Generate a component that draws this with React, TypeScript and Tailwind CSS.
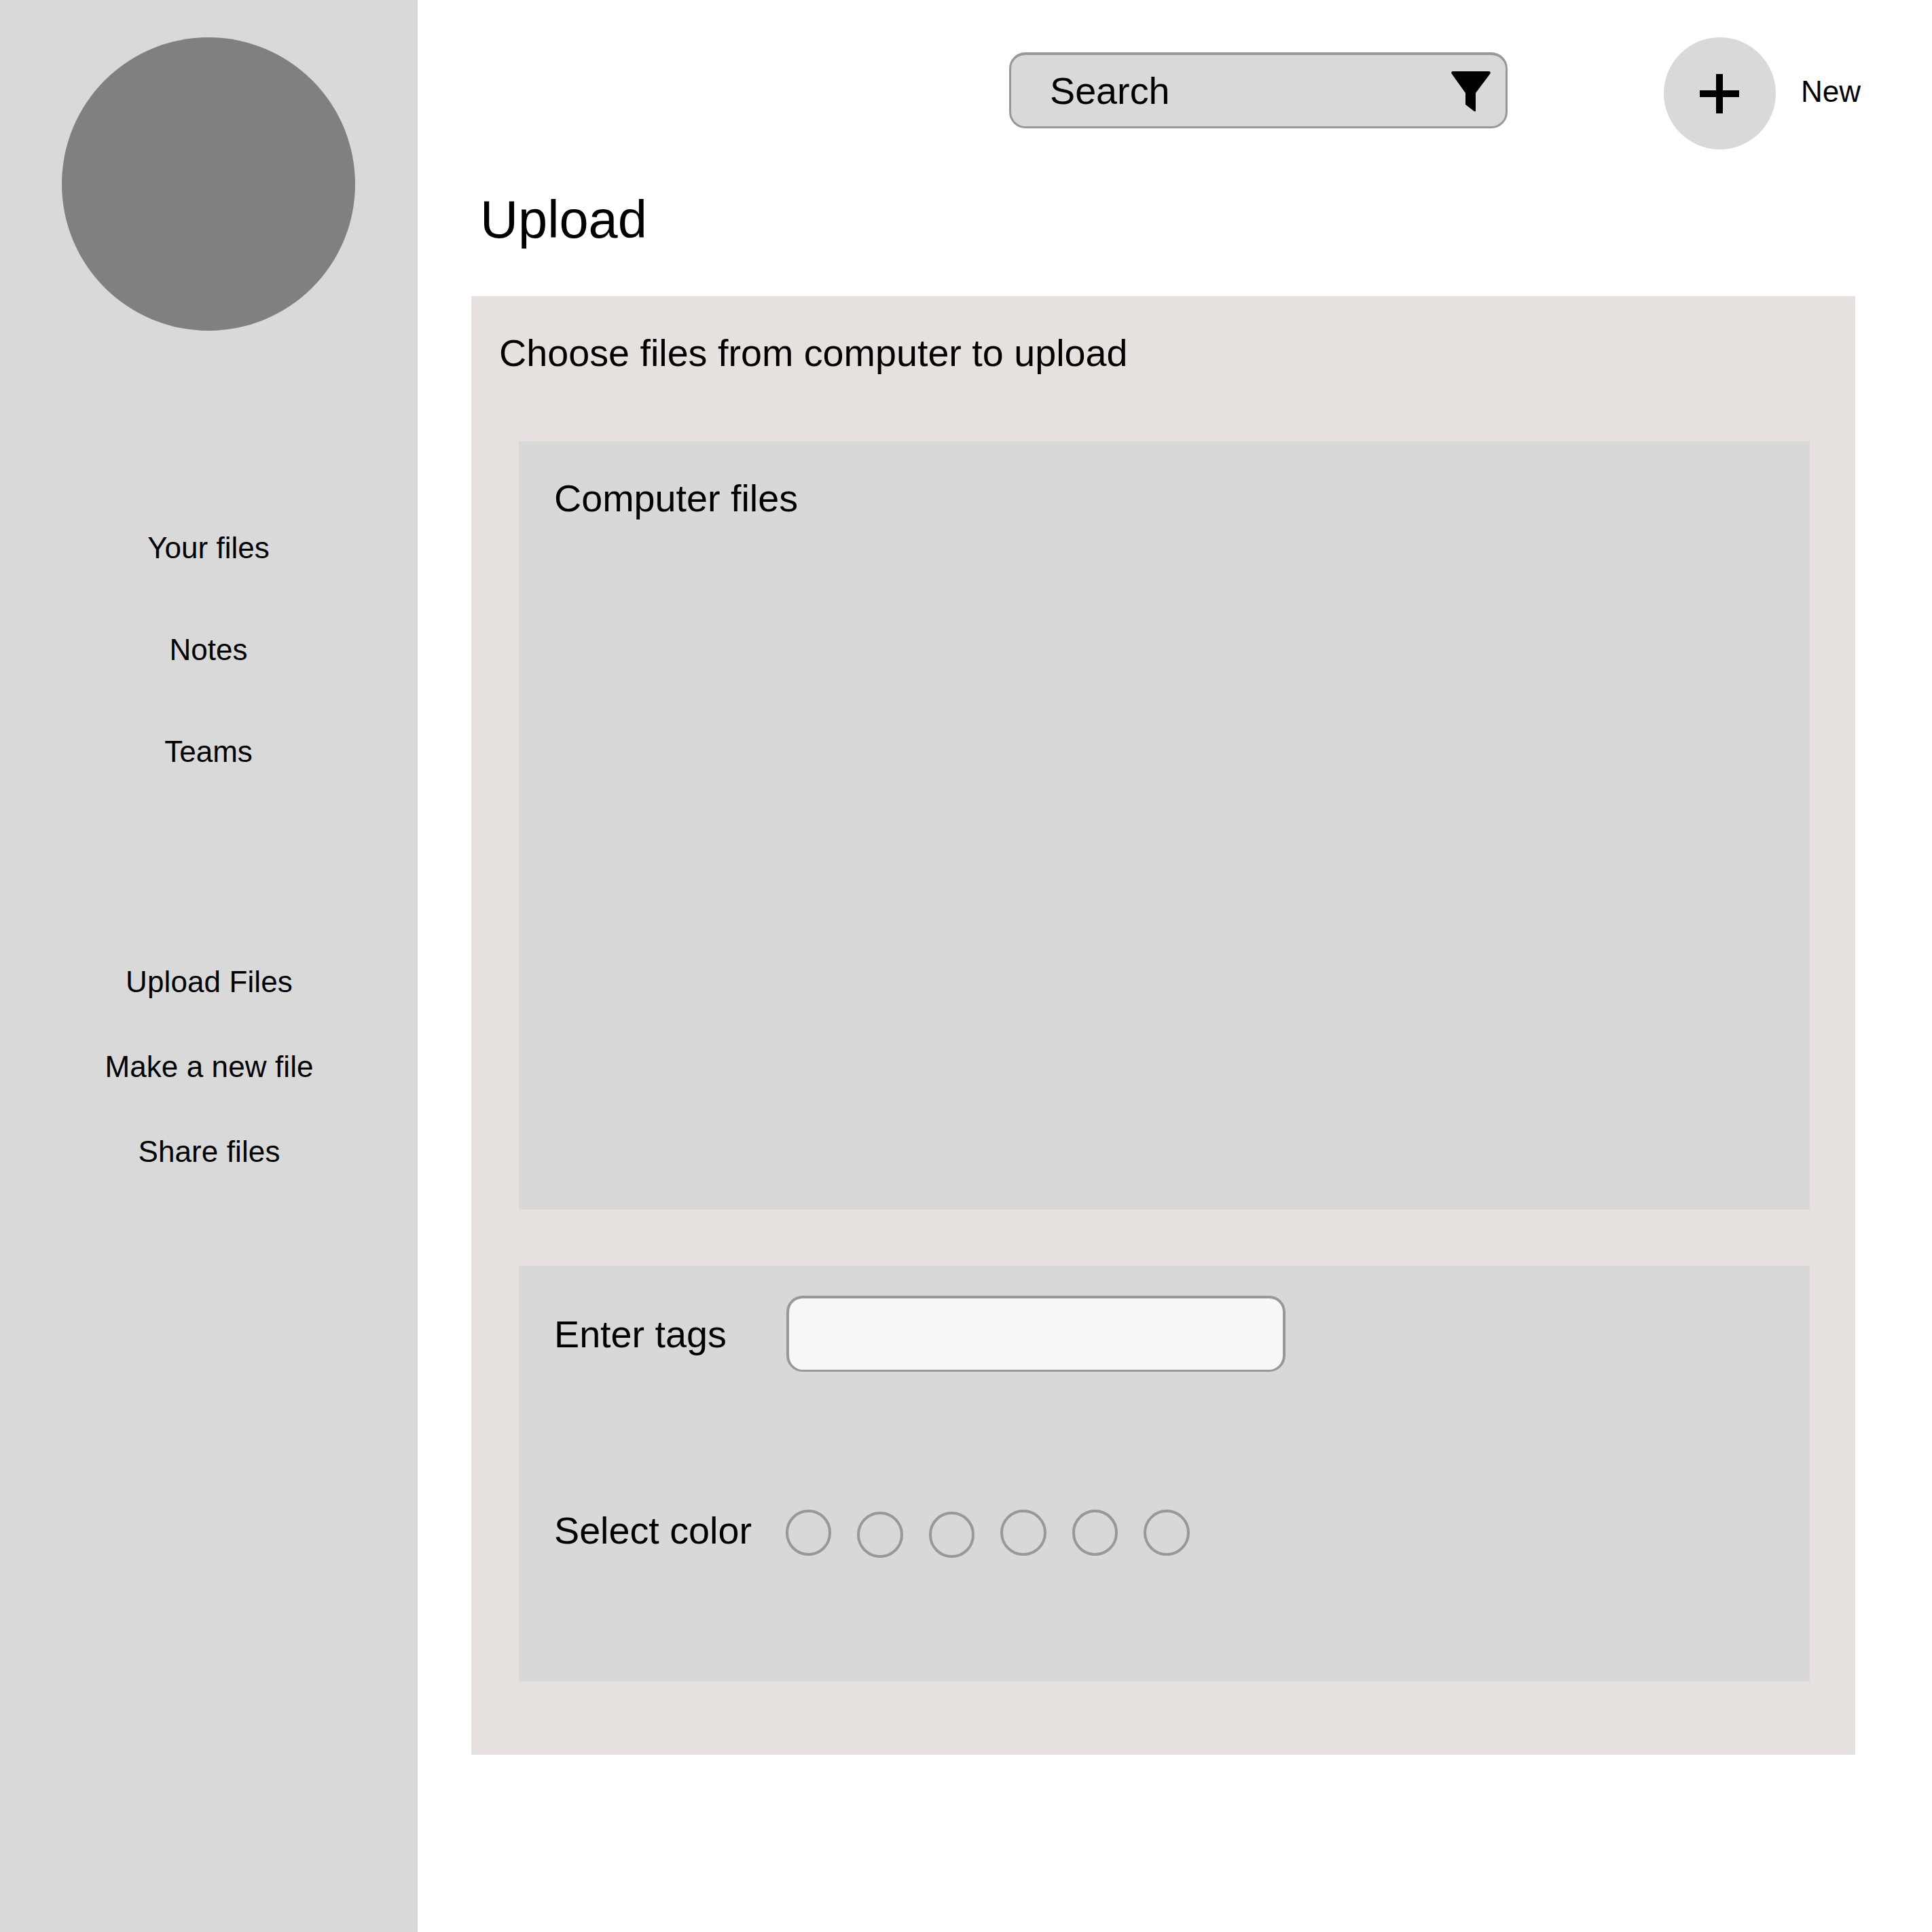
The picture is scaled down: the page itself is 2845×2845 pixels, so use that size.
const navPrimary = ["Your files", "Notes", "Teams"];
const navActions = ["Upload Files", "Make a new file", "Share files"];
const swatches = [false, true, true, false, false, false];

function Sidebar() {
  return (
    <aside className="flex h-full w-[615px] shrink-0 flex-col items-center bg-[#d9d9d9] pt-[55px] text-[44px] leading-[50px]">
      <div className="mr-px size-[432px] rounded-full bg-[#827f80]" />
      <nav className="mt-[295px] mr-px flex flex-col items-center gap-[100px]">
        {navPrimary.map((label) => (
          <a key={label}>{label}</a>
        ))}
      </nav>
      <nav className="mt-[289px] ml-px flex flex-col items-center gap-[75px] tracking-[0.1px]">
        {navActions.map((label) => (
          <a key={label}>{label}</a>
        ))}
      </nav>
    </aside>
  );
}

function Header() {
  return (
    <header className="flex h-[165px] items-start">
      <div className="mt-[22px] ml-[871px] flex h-[112px] w-[734px] items-center justify-between rounded-[24px] border-[3px] border-t-[4px] border-[#989898] bg-[#d9d9d9] pr-[22px] pl-[57px]">
        <span className="text-[55.7px] leading-[64px]">Search</span>
        <svg className="mt-px h-[59px] w-[58px]" viewBox="0 0 58 59" fill="black">
          <path d="M2 0H56Q59 1 57 4L36 32V59H34L21 49V32L1 4Q-1 1 2 0Z" />
        </svg>
      </div>
      <button className="ml-[230px] flex size-[165px] items-center justify-center rounded-full bg-[#d9d9d9] pr-[2px]">
        <svg className="size-[58px]" viewBox="0 0 58 58" fill="black">
          <path d="M24 0H34V24H58V34H34V58H24V34H0V24H24Z" />
        </svg>
      </button>
      <span className="mt-[55px] ml-[37px] text-[44px] leading-[50px]">New</span>
    </header>
  );
}

export default function App() {
  return (
    <div className="flex h-[2845px] w-[2845px] overflow-hidden bg-white font-['Liberation_Sans',Arial,sans-serif] text-black">
      <Sidebar />
      <main className="flex flex-1 flex-col pt-[55px]">
        <Header />
        <h1 className="mt-[59px] ml-[92px] text-[77.6px] leading-[88px]">Upload</h1>
        <section className="mt-[69px] ml-[79px] h-[2148px] w-[2038px] bg-[#e6e1df] pr-[67px] pl-[70px]">
          <h2 className="-ml-[29px] pt-[52px] text-[55.7px] leading-[64px]">
            Choose files from computer to upload
          </h2>
          <div className="mt-[98px] h-[1131px] bg-[#d8d8d8] pt-[52px] pl-[52px] text-[55.7px] leading-[64px]">
            Computer files
          </div>
          <div className="mt-[83px] h-[612px] bg-[#d8d8d8] pt-[44px] pl-[52px] text-[55.7px] leading-[64px]">
            <div className="flex h-[112px] items-center">
              <label className="w-[342px] pt-[2px]">Enter tags</label>
              <div className="h-[112px] w-[735px] rounded-[24px] border-[4px] border-b-[3px] border-[#989898] bg-[#f9f6f7]" />
            </div>
            <div className="mt-[203px] flex h-[68px] items-center">
              <label className="w-[340.5px] pb-[7px]">Select color</label>
              <div className="flex gap-[38px]">
                {swatches.map((low, i) => (
                  <div
                    key={i}
                    className={
                      low
                        ? "mt-[3px] -mb-[3px] size-[67.5px] rounded-full border-[4px] border-[#989898]"
                        : "size-[67.5px] rounded-full border-[4px] border-[#989898]"
                    }
                  />
                ))}
              </div>
            </div>
          </div>
        </section>
      </main>
    </div>
  );
}
